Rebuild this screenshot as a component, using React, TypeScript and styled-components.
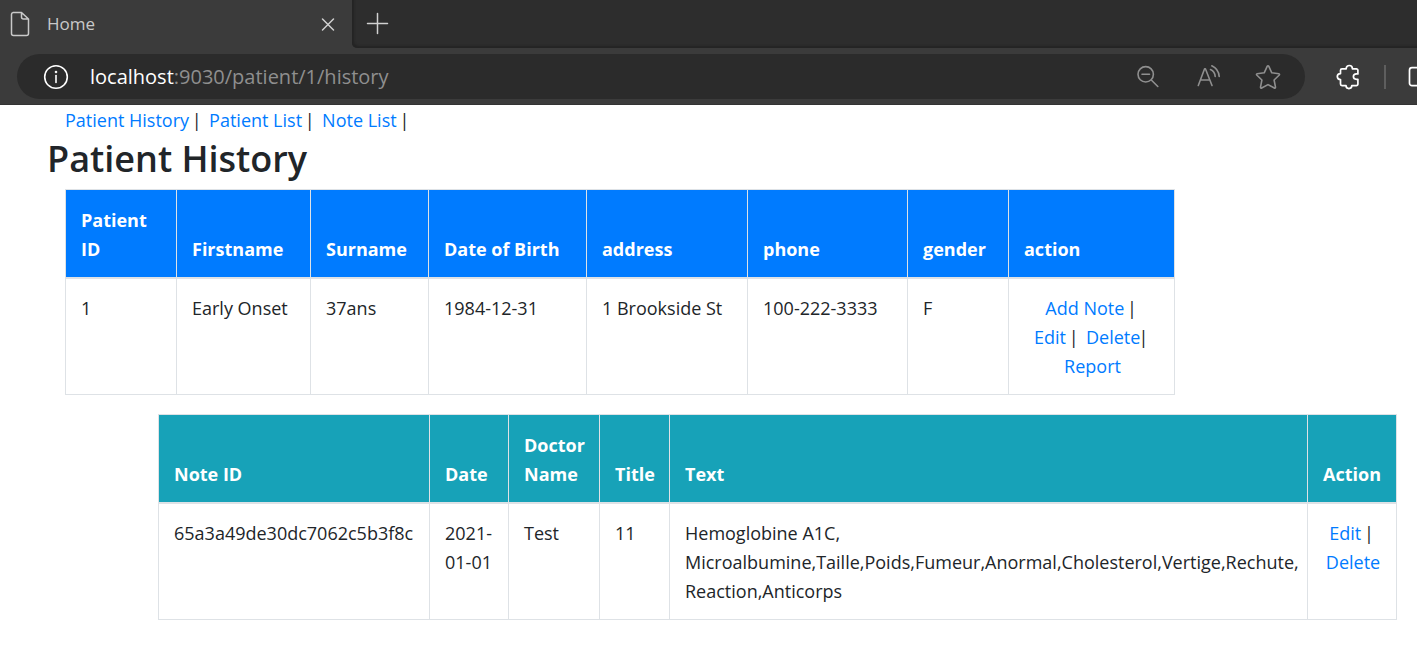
import React from "react";
import styled, { createGlobalStyle } from "styled-components";

const GlobalStyle = createGlobalStyle`
  *, *::before, *::after { box-sizing: border-box; }
  body {
    margin: 0;
    background: #fff;
    color: #212529;
    font-family: "Open Sans", "Noto Sans", sans-serif;
    font-size: 18px;
    line-height: 29px;
    overflow-x: hidden;
  }
`;

const Chrome = styled.header`
  background: #3b3b3b;
  border-bottom: 1px solid #333;
`;

const TabStrip = styled.div`
  display: flex;
  height: 48px;
  background: #3b3b3b;
`;

const Tab = styled.div`
  display: flex;
  align-items: center;
  width: 352px;
  padding: 0 13px 0 10px;
  background: #3b3b3b;
  color: #c9c9c9;
  font-size: 17px;
`;

const TabTitle = styled.span`
  flex: 1;
  padding: 0 0 2px 17px;
`;

const StripRest = styled.div`
  flex: 1;
  display: flex;
  align-items: center;
  padding-left: 14px;
  background: #2d2d2d;
  border-bottom-left-radius: 5px;
  box-shadow: inset 2px -2px 2px #242424;
`;

const IconButton = styled.button`
  display: flex;
  flex: none;
  padding: 0;
  border: 0;
  background: none;
  color: ${(p) => p.color || "#d0d0d0"};
  cursor: pointer;
`;

const Toolbar = styled.div`
  display: flex;
  align-items: center;
  padding: 6px 0 5px 17px;
  overflow: hidden;
`;

const AddressBar = styled.form`
  flex: 1;
  display: flex;
  align-items: center;
  height: 45px;
  padding: 0 24px 0 26px;
  border-radius: 23px;
  background: #2b2b2b;
  font-size: 20px;
`;

const Host = styled.label`
  padding-left: 21px;
  color: #fff;
`;

const UrlInput = styled.input`
  flex: 1;
  min-width: 0;
  padding: 0;
  border: 0;
  outline: 0;
  background: transparent;
  color: #8f8f8f;
  font: inherit;
`;

const AddressActions = styled.div`
  display: flex;
  align-items: center;
  gap: 34px;
`;

const ToolbarActions = styled.div`
  display: flex;
  align-items: center;
  width: 112px;
  padding-left: 31px;
`;

const Divider = styled.span`
  flex: none;
  width: 2px;
  height: 24px;
  margin: 0 22px;
  background: #5e5e5e;
`;

const Nav = styled.nav`
  padding: 1px 0 0 65px;
`;

const Link = styled.a`
  color: #007bff;
  text-decoration: none;
`;

const BarBox = styled.span`
  display: inline-flex;
  justify-content: center;
  width: 6px;
`;

const Bar = () => <BarBox>|</BarBox>;

const Title = styled.h1`
  margin: 0 0 7px;
  padding: 1px 0 0 47px;
  font-size: 36px;
  line-height: 46px;
  font-weight: 550;
`;

const TableArea = styled.section<{ $left: number; $right: number }>`
  padding: 0 ${(p) => p.$right}px 19px ${(p) => p.$left}px;
`;

const Table = styled.table<{ $head: string }>`
  width: 100%;
  table-layout: fixed;
  border-collapse: collapse;
  border: 1px solid #dee2e6;

  th, td {
    border: 1px solid #dee2e6;
    text-align: left;
  }
  th {
    padding: 16px 12px 13px 15px;
    background: ${(p) => p.$head};
    border-bottom-width: 2px;
    color: #fff;
    font-weight: 700;
    vertical-align: bottom;
  }
  td {
    padding: 15px 13px 13px 15px;
    vertical-align: top;
  }
`;

const Col = styled.col<{ $w: number }>`
  width: ${(p) => p.$w}px;
`;

const ActionCell = styled.td`
  && { text-align: center; }
`;

const Svg = ({ w, h, sw = 1.5, children }: { w: number; h: number; sw?: number; children: React.ReactNode }) => (
  <svg width={w} height={h} viewBox={`0 0 ${w} ${h}`} fill="none" stroke="currentColor" strokeWidth={sw} strokeLinejoin="round" strokeLinecap="round">
    {children}
  </svg>
);

const patientCols = [111, 134, 118, 158, 161, 160, 101, 166];
const patientHeads = ["Patient ID", "Firstname", "Surname", "Date of Birth", "address", "phone", "gender", "action"];
const patient = ["1", "Early Onset", "37ans", "1984-12-31", "1 Brookside St", "100-222-3333", "F"];

const noteCols = [271, 79, 91, 70, 638, 89];
const noteHeads = ["Note ID", "Date", "Doctor Name", "Title", "Text", "Action"];
const note = [
  "65a3a49de30dc7062c5b3f8c",
  "2021-01-01",
  "Test",
  "11",
  "Hemoglobine A1C, Microalbumine,Taille,Poids,Fumeur,Anormal,Cholesterol,Vertige,Rechute, Reaction,Anticorps",
];

export default function App() {
  return (
    <>
      <GlobalStyle />
      <Chrome>
        <TabStrip>
          <Tab>
            <Svg w={20} h={26}>
              <path d="M3 1.5h8.5L18.5 8v14.5a2 2 0 0 1-2 2H3.500a2 2 0 0 1-2-2v-19a2 2 0 0 1 2-2zM11.500 1.500V6a2 2 0 0 0 2 2h5" />
            </Svg>
            <TabTitle>Home</TabTitle>
            <IconButton aria-label="Close tab">
              <Svg w={22} h={22}><path d="M5.500 6l11 11M16.500 6l-11 11" /></Svg>
            </IconButton>
          </Tab>
          <StripRest>
            <IconButton aria-label="New tab">
              <Svg w={23} h={24}><path d="M1.500 11.500h20M11.500 1.500v20" /></Svg>
            </IconButton>
          </StripRest>
        </TabStrip>
        <Toolbar>
          <AddressBar onSubmit={(e) => e.preventDefault()}>
            <IconButton type="button" color="#fff" aria-label="Site information">
              <Svg w={26} h={26} sw={1.6}>
                <circle cx="13" cy="13" r="11.300" />
                <path d="M13 11.500v7" />
                <circle cx="13" cy="8" r="0.500" />
              </Svg>
            </IconButton>
            <Host htmlFor="url">localhost</Host>
            <UrlInput id="url" defaultValue=":9030/patient/1/history" />
            <AddressActions>
              <IconButton type="button" color="#8f8f8f" aria-label="Zoom out">
                <Svg w={26} h={26} sw={1.6}>
                  <circle cx="10.700" cy="10.300" r="7.700" />
                  <path d="M7 10.300h7.500M16.300 16l6.500 6.500" />
                </Svg>
              </IconButton>
              <IconButton type="button" color="#8f8f8f" aria-label="Read aloud">
                <Svg w={26} h={26} sw={1.6}>
                  <path d="M3.300 21.500L9.600 4.800h.8L17 21.500M5.500 16h9.300M16.800 1.800c4 1.800 7 5.700 7.400 10.700M15.500 5.500c2.700 1.300 4.500 4 4.700 7" />
                </Svg>
              </IconButton>
              <IconButton type="button" color="#8f8f8f" aria-label="Add to favorites">
                <Svg w={26} h={26} sw={1.6}>
                  <path d="M12.300 2.200a.8.8 0 0 1 1.400 0l3.100 6.600 7.100.9a.8.8 0 0 1 .4 1.300l-5.200 5 1.400 7.200a.8.8 0 0 1-1.200.8L13 20.600 6.700 24a.8.8 0 0 1-1.200-.8L6.900 16l-5.200-5a.8.8 0 0 1 .4-1.300l7.100-.9z" />
                </Svg>
              </IconButton>
            </AddressActions>
          </AddressBar>
          <ToolbarActions>
            <IconButton color="#fff" aria-label="Extensions">
              <Svg w={26} h={26} sw={1.7}>
                <path d="M6 4.800h4.200C10.200 2.700 11.500 1.500 13.300 1.500s3.100 1.200 3.100 3.300h4a1.500 1.500 0 0 1 1.500 1.500v3.600h-1.400c-1.900 0-3.100 1-3.100 2.700s1.200 2.700 3.100 2.700h1.400v4.800a1.500 1.500 0 0 1-1.500 1.500h-4.600c0 2-1.200 3-2.900 3s-2.900-1-2.900-3H6a1.500 1.500 0 0 1-1.500-1.500v-4.500c-2.100 0-3.200-1.200-3.200-3s1.100-3 3.200-3V6.300A1.500 1.500 0 0 1 6 4.800z" />
              </Svg>
            </IconButton>
            <Divider />
            <IconButton color="#fff" aria-label="Split screen">
              <Svg w={26} h={26} sw={1.7}><rect x="1.500" y="3.700" width="22" height="18" rx="2.500" /><path d="M12.500 3.700v18" /></Svg>
            </IconButton>
          </ToolbarActions>
        </Toolbar>
      </Chrome>
      <main>
        <Nav>
          <Link href="#history">Patient History</Link> <Bar /> &nbsp;
          <Link href="#patients">Patient List</Link> <Bar /> &nbsp;
          <Link href="#notes">Note List</Link> <Bar />
        </Nav>
        <Title>Patient History</Title>
        <TableArea $left={65} $right={242}>
          <Table $head="#007bff">
            <colgroup>{patientCols.map((w, i) => <Col key={i} $w={w} />)}</colgroup>
            <thead><tr>{patientHeads.map((t) => <th key={t} scope="col">{t}</th>)}</tr></thead>
            <tbody>
              <tr>
                {patient.map((t) => <td key={t}>{t}</td>)}
                <ActionCell>
                  <Link href="#add">Add Note</Link> <Bar />&nbsp;<br />
                  <Link href="#edit">Edit</Link> <Bar /> &nbsp;<Link href="#delete">Delete</Link><Bar />&nbsp;<br />
                  <Link href="#report">Report</Link>
                </ActionCell>
              </tr>
            </tbody>
          </Table>
        </TableArea>
        <TableArea $left={158} $right={20}>
          <Table $head="#17a2b8">
            <colgroup>{noteCols.map((w, i) => <Col key={i} $w={w} />)}</colgroup>
            <thead><tr>{noteHeads.map((t) => <th key={t} scope="col">{t}</th>)}</tr></thead>
            <tbody>
              <tr>
                {note.map((t) => <td key={t}>{t}</td>)}
                <ActionCell>
                  <Link href="#edit-note">Edit</Link> <Bar />&nbsp;<br />
                  <Link href="#delete-note">Delete</Link>
                </ActionCell>
              </tr>
            </tbody>
          </Table>
        </TableArea>
      </main>
    </>
  );
}
